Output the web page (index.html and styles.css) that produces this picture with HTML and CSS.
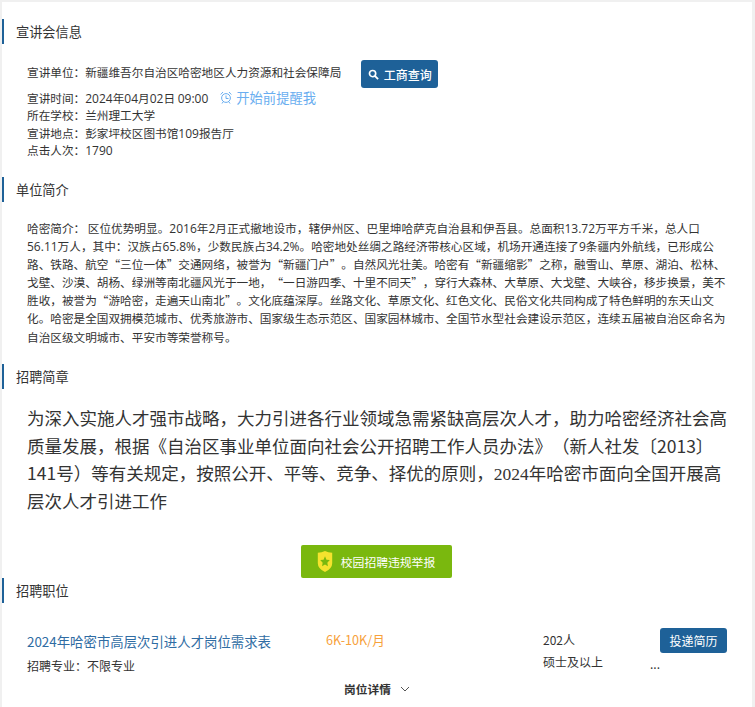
FILE: index.html
```html
<!DOCTYPE html>
<html lang="zh-CN">
<head>
<meta charset="utf-8">
<title>宣讲会信息</title>
<link rel="stylesheet" href="styles.css">
</head>
<body>
<main class="panel">
  <section class="info">
    <h2 class="head">宣讲会信息</h2>
    <div class="unit-row">
      <span>宣讲单位：新疆维吾尔自治区哈密地区人力资源和社会保障局</span>
      <a class="btn-query"><svg width="11" height="11" viewBox="0 0 12 12"><circle cx="5" cy="5" r="3.4" fill="none" stroke="#fff" stroke-width="1.8"/><path d="M7.5 7.5L11 11" stroke="#fff" stroke-width="2"/></svg>工商查询</a>
    </div>
    <div class="time-row">
      <span>宣讲时间：<span class="num">2024</span>年<span class="num">04</span>月<span class="num">02</span>日 <span class="num">09:00</span></span>
      <span class="remind"><svg width="12" height="13" viewBox="0 0 12 13" fill="none" stroke="#6aaef0"><circle cx="6" cy="7" r="4.4"/><path d="M6 4.5V7.5H8.5M0.7 3.5L3 1M11.3 3.5L9 1M3 11L2 12.5M9 11L10 12.5"/></svg>开始前提醒我</span>
    </div>
    <p class="line">所在学校：兰州理工大学</p>
    <p class="line">宣讲地点：彭家坪校区图书馆<span class="num">109</span>报告厅</p>
    <p class="line">点击人次：<span class="num">1790</span></p>
  </section>
  <section class="intro">
    <h2 class="head">单位简介</h2>
    <p class="intro-text">哈密简介： 区位优势明显。<span class="num">2016</span>年<span class="num">2</span>月正式撤地设市，辖伊州区、巴里坤哈萨克自治县和伊吾县。总面积<span class="num">13.72</span>万平方千米，总人口<span class="num">56.11</span>万人，其中：汉族占<span class="num">65.8%</span>，少数民族占<span class="num">34.2%</span>。哈密地处丝绸之路经济带核心区域，机场开通连接了<span class="num">9</span>条疆内外航线，已形成公路、铁路、航空“三位一体”交通网络，被誉为“新疆门户”。自然风光壮美。哈密有“新疆缩影”之称，融雪山、草原、湖泊、松林、戈壁、沙漠、胡杨、绿洲等南北疆风光于一地，“一日游四季、十里不同天”，穿行大森林、大草原、大戈壁、大峡谷，移步换景，美不胜收，被誉为“游哈密，走遍天山南北”。文化底蕴深厚。丝路文化、草原文化、红色文化、民俗文化共同构成了特色鲜明的东天山文化。哈密是全国双拥模范城市、优秀旅游市、国家级生态示范区、国家园林城市、全国节水型社会建设示范区，连续五届被自治区命名为自治区级文明城市、平安市等荣誉称号。</p>
  </section>
  <section class="brief">
    <h2 class="head">招聘简章</h2>
    <p class="brief-text">为深入实施人才强市战略，大力引进各行业领域急需紧缺高层次人才，助力哈密经济社会高质量发展，根据《自治区事业单位面向社会公开招聘工作人员办法》（新人社发〔2013〕141号）等有关规定，按照公开、平等、竞争、择优的原则，<span class="serif">2024</span>年哈密市面向全国开展高层次人才引进工作</p>
    <div class="report-wrap">
      <a class="btn-report"><svg width="16" height="23" viewBox="0 0 20 26" preserveAspectRatio="none"><path d="M1 3Q6 3 10 1Q14 3 19 3V15Q19 21 10 25Q1 21 1 15Z" fill="#f5e32e"/><path d="M10 7L11.8 10.9L16 11.4L12.9 14.3L13.7 18.5L10 16.4L6.3 18.5L7.1 14.3L4 11.4L8.2 10.9Z" fill="#7ab80e"/></svg>校园招聘违规举报</a>
    </div>
  </section>
  <section class="jobs">
    <h2 class="head">招聘职位</h2>
    <div class="job">
      <div class="job-main">
        <a class="job-title">2024年哈密市高层次引进人才岗位需求表</a>
        <p class="job-major">招聘专业：不限专业</p>
      </div>
      <div class="job-pay">6K-10K/月</div>
      <div class="job-req">
        <p>202人</p>
        <p class="job-degree">硕士及以上</p>
      </div>
      <div class="job-act">
        <a class="btn-apply">投递简历</a>
        <span class="dots">...</span>
      </div>
    </div>
    <div class="detail"><strong>岗位详情</strong><svg width="10" height="6" viewBox="0 0 10 6" fill="none" stroke="#555"><path d="M1 1L5 5L9 1"/></svg></div>
  </section>
</main>
</body>
</html>
```
FILE: styles.css
```css
* { box-sizing: border-box; }
html, body { height: 100%; }
body {
  margin: 0;
  background: #f0f0f0;
  overflow: hidden;
  font-family: "Noto Sans CJK SC", "Liberation Sans", sans-serif;
  color: #333;
  text-spacing-trim: space-all;
  font-feature-settings: "chws" 0;
}
p, h2 { margin: 0; }
.num { font-family: "Open Sans", "Noto Sans CJK SC", sans-serif; font-size: 12px; line-height: 1; }
.serif { font-family: "Liberation Serif", serif; line-height: 1; }
.panel {
  margin: 2px 3px 0 2px;
  background: #fff;
  height: 705px;
  padding-top: 17px;
  overflow: hidden;
}
.head {
  height: 25px;
  line-height: 25px;
  border-left: 2px solid #1e6198;
  padding-left: 12px;
  font-size: 13.2px;
  font-weight: 400;
  color: #333;
}
.info { height: 158px; font-size: 11.65px; }
.unit-row {
  display: flex;
  align-items: center;
  margin: 16px 0 0 25px;
  height: 28px;
  gap: 20px;
}
.unit-row > span { position: relative; top: -3px; }
.btn-query {
  display: flex;
  align-items: center;
  justify-content: center;
  gap: 5px;
  width: 77px;
  height: 28px;
  background: #1e6198;
  color: #fff;
  border-radius: 3px;
  font-size: 12px;
  font-weight: 500;
}
.time-row {
  display: flex;
  align-items: center;
  gap: 12px;
  margin: 0 0 0 25px;
  height: 18px;
}
.remind { display: flex; align-items: center; gap: 4px; color: #6aaef0; font-size: 13.3px; }
.line { margin-left: 25px; height: 17.6px; line-height: 17.6px; }
.intro { height: 187px; }
.intro-text {
  margin: 17px 24px 0 25px;
  font-size: 11.65px;
  line-height: 18.1px;
  color: #333;
}
.brief { height: 214px; }
.brief-text {
  margin: 15px 20px 0 25px;
  font-size: 17.5px;
  line-height: 27.6px;
  color: #333;
}
.report-wrap { display: flex; justify-content: center; margin: 31px 2px 0 0; }
.btn-report {
  display: flex;
  align-items: center;
  justify-content: center;
  gap: 8px;
  width: 151px;
  height: 33px;
  background: #7ab80e;
  color: #fff;
  border-radius: 2px;
  font-size: 11.8px;
}
.job {
  display: flex;
  margin: 26px 25px 0 25px;
  font-size: 12px;
}
.job-main { width: 299px; }
.job-title { color: #2f6ca3; font-size: 13.4px; line-height: 24px; }
.job-major { margin-top: 4px; line-height: 18px; }
.job-pay { width: 217px; color: #f7a13a; font-size: 12.6px; line-height: 22px; }
.job-req { width: 117px; line-height: 22px; }
.job-act { position: relative; }
.btn-apply {
  display: flex;
  align-items: center;
  justify-content: center;
  width: 67px;
  height: 25px;
  margin-top: -1px;
  background: #1e6198;
  color: #fff;
  border-radius: 3px;
}
.dots { display: block; margin-top: 2px; margin-left: -10px; line-height: 18px; }
.detail {
  display: flex;
  justify-content: center;
  align-items: center;
  gap: 9px;
  margin-top: 5px;
  font-size: 11.7px;
}
.detail strong { font-weight: 700; }
```
